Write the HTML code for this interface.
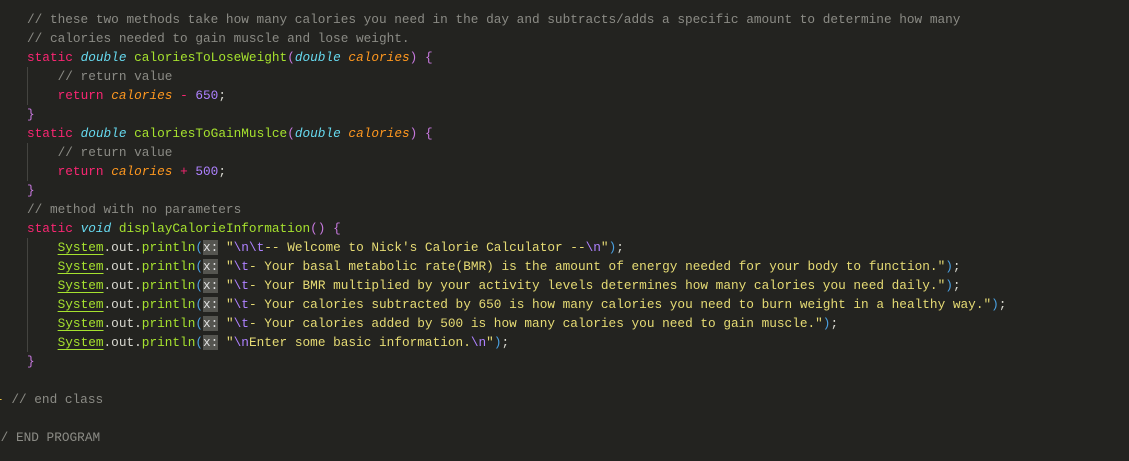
<!DOCTYPE html>
<html><head><meta charset="utf-8"><style>
body{margin:0;background:#232320;width:1129px;height:461px;overflow:hidden;position:relative;font-family:"Liberation Mono",monospace;font-size:12.76px;}
.l{position:absolute;left:27px;height:19px;line-height:19px;white-space:pre;color:#d8d8d0;}
.c{color:#8b8b85}.k{color:#f92672}.t{color:#66d9ef;font-style:italic}.f{color:#a6e22e}.p{color:#fd971f;font-style:italic}
.n{color:#ae81ff}.s{color:#e6db74}.e{color:#ae81ff}.b1{color:#c678dd}.b2{color:#4aa0e0}.b3{color:#c678dd}
.u{color:#a6e22e;text-decoration:underline;text-decoration-color:#a6e22e;text-underline-offset:3px}
.h{background:#555550;color:#e0e0e0}
.g{position:absolute;width:1px;background:#444440}
</style></head><body>
<div class="g" style="left:27px;top:67px;height:38px"></div>
<div class="g" style="left:27px;top:143px;height:38px"></div>
<div class="g" style="left:27px;top:238px;height:114px"></div>
<div class="l c" style="top:9.5px">// these two methods take how many calories you need in the day and subtracts/adds a specific amount to determine how many</div>
<div class="l c" style="top:28.5px">// calories needed to gain muscle and lose weight.</div>
<div class="l" style="top:47.5px"><span class="k">static</span> <span class="t">double</span> <span class="f">caloriesToLoseWeight</span><span class="b1">(</span><span class="t">double</span> <span class="p">calories</span><span class="b1">)</span> <span class="b3">{</span></div>
<div class="l c" style="top:66.5px">    // return value</div>
<div class="l" style="top:85.5px">    <span class="k">return</span> <span class="p">calories</span> <span class="k">-</span> <span class="n">650</span>;</div>
<div class="l" style="top:104.5px"><span class="b1">}</span></div>
<div class="l" style="top:123.5px"><span class="k">static</span> <span class="t">double</span> <span class="f">caloriesToGainMuslce</span><span class="b1">(</span><span class="t">double</span> <span class="p">calories</span><span class="b1">)</span> <span class="b3">{</span></div>
<div class="l c" style="top:142.5px">    // return value</div>
<div class="l" style="top:161.5px">    <span class="k">return</span> <span class="p">calories</span> <span class="k">+</span> <span class="n">500</span>;</div>
<div class="l" style="top:180.5px"><span class="b1">}</span></div>
<div class="l c" style="top:199.5px">// method with no parameters</div>
<div class="l" style="top:218.5px"><span class="k">static</span> <span class="t">void</span> <span class="f">displayCalorieInformation</span><span class="b1">()</span> <span class="b1">{</span></div>
<div class="l" style="top:237.5px">    <span class="u">System</span>.out.<span class="f">println</span><span class="b2">(</span><span class="h">x:</span> <span class="s">"<span class="e">\n\t</span>-- Welcome to Nick's Calorie Calculator --<span class="e">\n</span>"</span><span class="b2">)</span>;</div>
<div class="l" style="top:256.5px">    <span class="u">System</span>.out.<span class="f">println</span><span class="b2">(</span><span class="h">x:</span> <span class="s">"<span class="e">\t</span>- Your basal metabolic rate(BMR) is the amount of energy needed for your body to function."</span><span class="b2">)</span>;</div>
<div class="l" style="top:275.5px">    <span class="u">System</span>.out.<span class="f">println</span><span class="b2">(</span><span class="h">x:</span> <span class="s">"<span class="e">\t</span>- Your BMR multiplied by your activity levels determines how many calories you need daily."</span><span class="b2">)</span>;</div>
<div class="l" style="top:294.5px">    <span class="u">System</span>.out.<span class="f">println</span><span class="b2">(</span><span class="h">x:</span> <span class="s">"<span class="e">\t</span>- Your calories subtracted by 650 is how many calories you need to burn weight in a healthy way."</span><span class="b2">)</span>;</div>
<div class="l" style="top:313.5px">    <span class="u">System</span>.out.<span class="f">println</span><span class="b2">(</span><span class="h">x:</span> <span class="s">"<span class="e">\t</span>- Your calories added by 500 is how many calories you need to gain muscle."</span><span class="b2">)</span>;</div>
<div class="l" style="top:332.5px">    <span class="u">System</span>.out.<span class="f">println</span><span class="b2">(</span><span class="h">x:</span> <span class="s">"<span class="e">\n</span>Enter some basic information.<span class="e">\n</span>"</span><span class="b2">)</span>;</div>
<div class="l" style="top:351.5px"><span class="b1">}</span></div>
<div class="l" style="top:389.5px;left:-4px"><span style="color:#e8c040">-</span> <span class="c">// end class</span></div>
<div class="l c" style="top:427.5px;left:-7px">// END PROGRAM</div>
</body></html>
